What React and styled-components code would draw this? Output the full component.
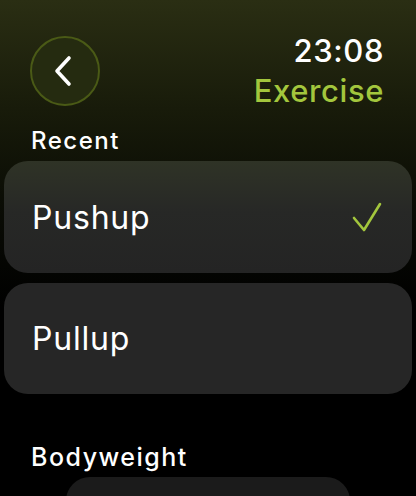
import React from "react";
import styled, { createGlobalStyle } from "styled-components";

const GlobalStyle = createGlobalStyle`
  html, body {
    margin: 0;
    padding: 0;
    background: #000;
  }
  * {
    box-sizing: border-box;
  }
`;

const Screen = styled.div`
  width: 416px;
  height: 496px;
  overflow: hidden;
  background: linear-gradient(180deg, #2a2e13 0%, #181b0a 22%, #0b0d05 40%, #000 62%);
  font-family: Inter, "Noto Sans", "Liberation Sans", sans-serif;
  color: #fff;
  -webkit-font-smoothing: antialiased;
`;

const Header = styled.header`
  display: flex;
  justify-content: space-between;
  align-items: flex-start;
  padding: 31px 32px 0 30px;
`;

const BackButton = styled.button`
  width: 70px;
  height: 70px;
  margin-top: 5px;
  border-radius: 50%;
  border: 2px solid #4a5a16;
  background: #252b10;
  display: flex;
  align-items: center;
  justify-content: center;
  padding: 0 4px 0 0;
  cursor: pointer;
`;

const TitleBlock = styled.div`
  display: flex;
  flex-direction: column;
  align-items: flex-end;
`;

const Clock = styled.div`
  font-size: 31px;
  line-height: 40px;
  font-weight: 500;
  letter-spacing: 0.6px;
`;

const Title = styled.div`
  font-size: 31px;
  line-height: 40px;
  font-weight: 500;
  color: #a3c63d;
  letter-spacing: 0.6px;
`;

const SectionLabel = styled.h2`
  margin: ${({ $top }) => $top}px 0 0;
  padding-left: 31px;
  font-size: ${({ $size }) => $size}px;
  line-height: 30px;
  font-weight: 500;
  letter-spacing: 1.5px;
`;

const List = styled.div`
  display: flex;
  flex-direction: column;
  gap: 10px;
  padding: 0 4px;
  margin-top: ${({ $top }) => $top}px;
`;

const Row = styled.div`
  height: ${({ $height }) => $height}px;
  border-radius: 24px;
  background: ${({ $tinted }) =>
    $tinted ? "linear-gradient(180deg, #2f3326 0%, #272826 45%, #242424 100%)" : "#262626"};
  display: flex;
  align-items: center;
  justify-content: space-between;
  padding: 0 30px 0 28px;
`;

const RowLabel = styled.span`
  font-size: 32px;
  font-weight: 400;
  letter-spacing: 0.8px;
`;

const PeekCard = styled.div`
  height: 60px;
  margin: 5px 66px 0;
  border-radius: 24px;
  background: #1b1b1b;
`;

function Chevron() {
  return (
    <svg width="22" height="32" viewBox="0 0 22 32" fill="none">
      <path
        d="M17 3 L5 16 L17 29"
        stroke="#fff"
        strokeWidth="3.6"
        strokeLinecap="round"
        strokeLinejoin="round"
      />
    </svg>
  );
}

function Check() {
  return (
    <svg width="30" height="30" viewBox="0 0 30 30" fill="none">
      <path
        d="M2 16 L12 28 L28 2"
        stroke="#a3c63d"
        strokeWidth="2.6"
        strokeLinecap="round"
        strokeLinejoin="round"
      />
    </svg>
  );
}

const recent = [
  { name: "Pushup", selected: true },
  { name: "Pullup", selected: false },
];

export default function App() {
  return (
    <>
      <GlobalStyle />
      <Screen>
        <Header>
          <BackButton aria-label="Back">
            <Chevron />
          </BackButton>
          <TitleBlock>
            <Clock>23:08</Clock>
            <Title>Exercise</Title>
          </TitleBlock>
        </Header>

        <SectionLabel $top={15} $size={24}>Recent</SectionLabel>
        <List $top={5}>
          {recent.map((item, i) => (
            <Row key={item.name} $tinted={i === 0} $height={i === 0 ? 112 : 111}>
              <RowLabel>{item.name}</RowLabel>
              {item.selected && <Check />}
            </Row>
          ))}
        </List>

        <SectionLabel $top={48} $size={25}>Bodyweight</SectionLabel>
        <PeekCard />
      </Screen>
    </>
  );
}
